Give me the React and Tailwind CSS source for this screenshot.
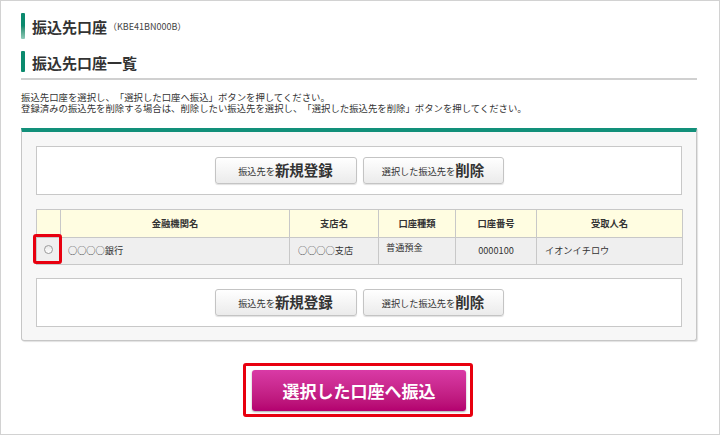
import React from 'react';

// 振込先口座一覧 screen
const FONT = "font-['Noto_Sans_CJK_JP','Noto_Sans',sans-serif]";

function SubButton({ small, big, w }) {
  return (
    <button
      className={`${w} h-[27px] flex items-end justify-center pb-[5px] rounded-[3px] border border-[#c4c4c4] bg-gradient-to-b from-white to-[#ebebeb] shadow-[0_1px_1px_rgba(0,0,0,0.12)] text-[#333]`}
    >
      <span className="text-[9.2px] leading-[12px] mb-[1px]">{small}</span>
      <span className="text-[14.5px] leading-[17px] font-bold">{big}</span>
    </button>
  );
}

function ButtonBox() {
  return (
    <div className="h-[49px] bg-white border border-[#c8c8c8] flex items-center justify-center gap-[6px] pb-[1px]">
      <SubButton small="振込先を" big="新規登録" w="w-[142px]" />
      <SubButton small="選択した振込先を" big="削除" w="w-[141px]" />
    </div>
  );
}

export default function App() {
  const th = 'border border-[#c8c8c8] text-[9.3px] font-semibold text-[#333] text-center';
  const td = 'border border-[#c8c8c8] text-[9.2px] text-[#333]';

  return (
    <div className={`${FONT} [text-spacing-trim:space-all] w-[720px] h-[435px] border border-[#d2d2d2] bg-white pl-[20px] pr-[22px] pt-[12px] text-[#333]`}>
      {/* page title */}
      <div className="flex items-center h-[26px]">
        <div className="w-[4px] h-[26px] rounded-[1px] bg-gradient-to-b from-[#0b8a6e] via-[#0b8a6e] to-[#8fcbb9]" />
        <h1 className="ml-[7px] text-[15px] font-bold leading-[18px] mt-[1px]">振込先口座</h1>
        <span className="ml-[1px] text-[9px] text-[#444] mt-[2px]">（KBE41BN000B）</span>
      </div>

      {/* section title */}
      <div className="flex items-center h-[21px] mt-[12px]">
        <div className="w-[4px] h-[21px] rounded-[1px] bg-[#0b8a6e]" />
        <h2 className="ml-[7px] text-[15px] font-bold leading-[18px] mt-[2px]">振込先口座一覧</h2>
      </div>
      <div className="mt-[6px] h-[2px] bg-[#d0d0d0]" />

      <div className="mt-[12px] text-[9.4px] leading-[11px] text-[#333]">
        <p>振込先口座を選択し、「選択した口座へ振込」ボタンを押してください。</p>
        <p>登録済みの振込先を削除する場合は、削除したい振込先を選択し、「選択した振込先を削除」ボタンを押してください。</p>
      </div>

      {/* panel */}
      <div className="mt-[14px] border-t-4 border-t-[#12907a] border-x border-b border-[#c6c6c6] rounded-b-[3px] bg-[#f7f7f7] shadow-[1px_1px_1px_rgba(0,0,0,0.12)] px-[14px] pt-[14px] pb-[13px]">
        <ButtonBox />

        <div className="relative mt-[14px]">
          <table className="w-[646px] border-collapse table-fixed">
            <colgroup>
              <col className="w-[24px]" />
              <col className="w-[229px]" />
              <col className="w-[89px]" />
              <col className="w-[77px]" />
              <col className="w-[81px]" />
              <col className="w-[146px]" />
            </colgroup>
            <thead>
              <tr className="h-[28px] bg-[#fffde1]">
                <th className={th}></th>
                <th className={th}>金融機関名</th>
                <th className={th}>支店名</th>
                <th className={th}>口座種類</th>
                <th className={th}>口座番号</th>
                <th className={th}>受取人名</th>
              </tr>
            </thead>
            <tbody>
              <tr className="h-[27px] bg-[#efefef]">
                <td className={`${td} text-center`}>
                  <span className="inline-block w-[9px] h-[9px] rounded-full border border-[#9a9a9a] bg-gradient-to-b from-[#e8e8e8] to-white align-middle mb-[4px]" />
                </td>
                <td className={`${td} pl-[7px]`}>○○○○銀行</td>
                <td className={`${td} pl-[8px]`}>○○○○支店</td>
                <td className={`${td} pl-[7px] pb-[6px]`}>普通預金</td>
                <td className={`${td} text-center`}>0000100</td>
                <td className={`${td} pl-[8px]`}>イオンイチロウ</td>
              </tr>
            </tbody>
          </table>
          {/* highlight on radio cell */}
          <div className="absolute left-[-3px] top-[25px] w-[29px] h-[30px] border-[3px] border-[#e8000f] rounded-[3px]" />
        </div>

        <div className="mt-[13px]">
          <ButtonBox />
        </div>
      </div>

      {/* main action */}
      <div className="mt-[22px] flex justify-center pr-[2px]">
        <div className="border-[3px] border-[#e8000f] rounded-[3px] pl-[6px] pr-[4px] pt-[4px] pb-[3px]">
          <button className="w-[214px] h-[41px] rounded-[3px] bg-gradient-to-b from-[#d93aa6] to-[#b4006f] shadow-[0_1px_2px_rgba(0,0,0,0.35)] text-white text-[17px] font-bold">
            選択した口座へ振込
          </button>
        </div>
      </div>
    </div>
  );
}
